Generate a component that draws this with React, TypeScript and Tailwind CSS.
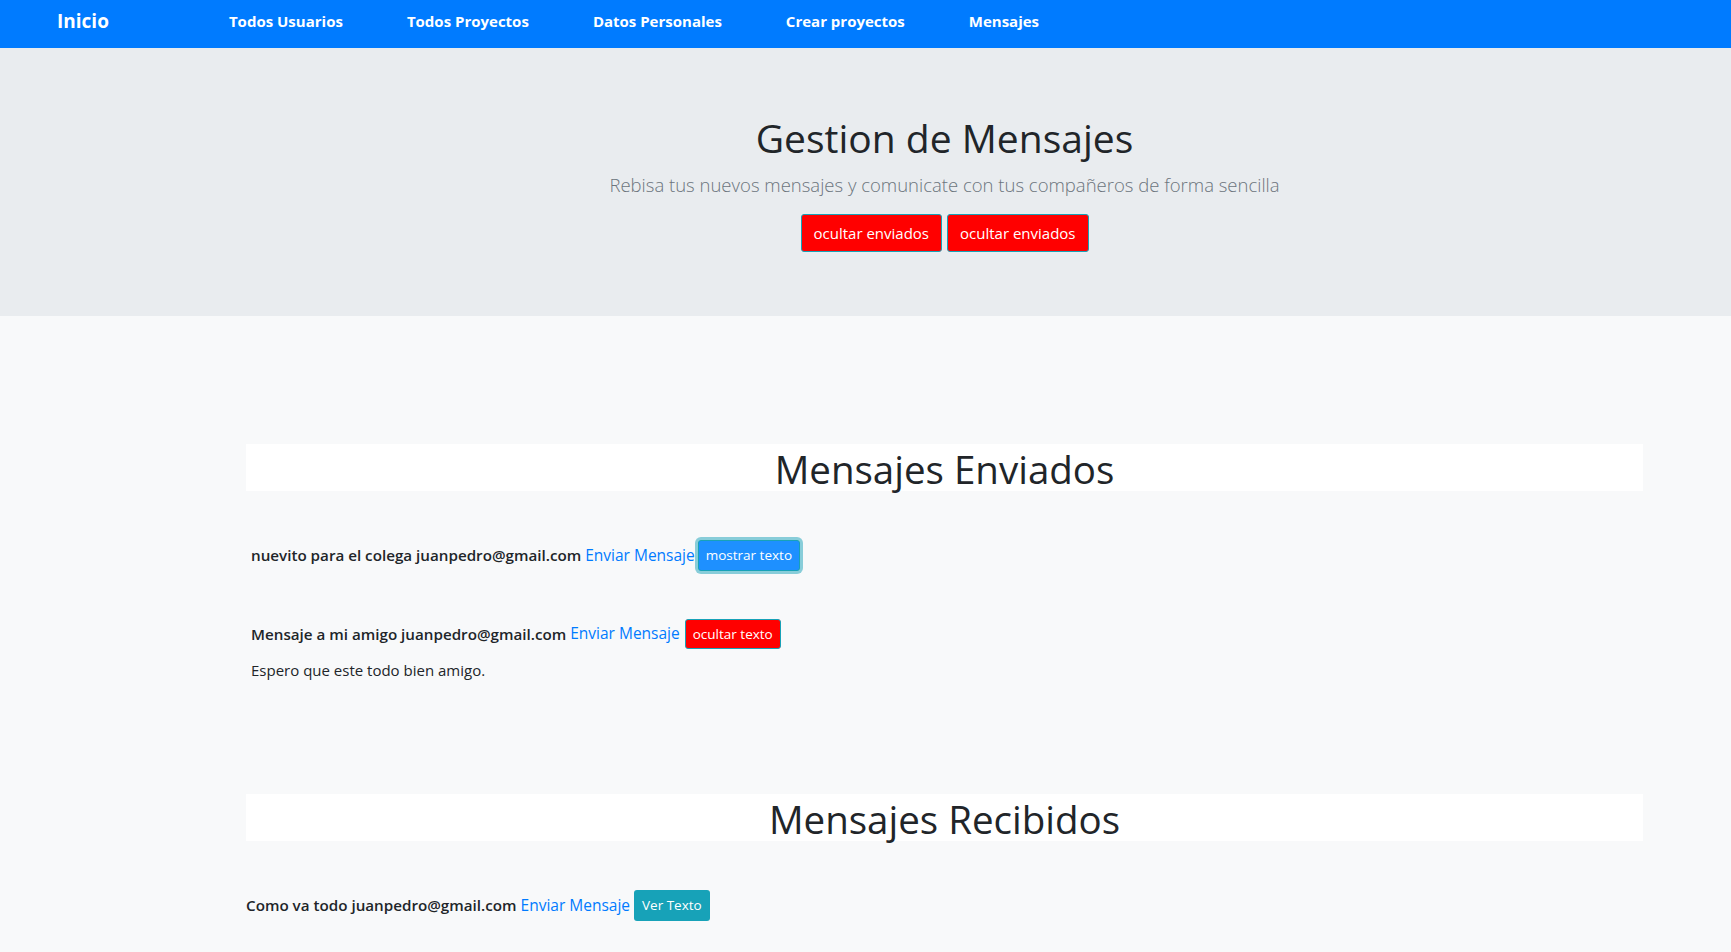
import React from 'react';

const navLinks = ['Todos Usuarios', 'Todos Proyectos', 'Datos Personales', 'Crear proyectos', 'Mensajes'];

export default function App() {
  return (
    <div className="min-h-[952px] bg-[#f8f9fa] text-[#212529] font-['Open_Sans',_'Noto_Sans',_sans-serif]">
      <nav className="flex h-[48px] items-center bg-[#007bff] pb-[6px] pl-[57px]">
        <a className="text-[19px] font-bold text-white">Inicio</a>
        <ul className="ml-[120px] flex gap-[64px]">
          {navLinks.map((l) => (
            <li key={l} className="text-[15px] font-bold text-white">{l}</li>
          ))}
        </ul>
      </nav>

      <header className="bg-[#e9ecef] pb-[64px] pl-[158px] pt-[66px] text-center">
        <h1 className="text-[39px] font-medium leading-[48px]">Gestion de Mensajes</h1>
        <p className="mt-[8px] text-[18.5px] font-light leading-[30px] text-[#6c757d]">
          Rebisa tus nuevos mensajes y comunicate con tus compañeros de forma sencilla
        </p>
        <div className="mt-[14px] flex justify-center gap-[5px]">
          <button className="h-[38px] rounded-[3px] border border-[#17a2b8] bg-[#ff0000] px-[12px] text-[15px] text-white">ocultar enviados</button>
          <button className="h-[38px] rounded-[3px] border border-[#17a2b8] bg-[#ff0000] px-[12px] text-[15px] text-white">ocultar enviados</button>
        </div>
      </header>

      <main className="mx-[88px] pb-[31px] pl-[158px] pt-[128px]">
        <section>
          <h2 className="h-[47px] bg-white text-center text-[38.5px] font-medium leading-[50px]">Mensajes Enviados</h2>
          <div className="mt-[49px] flex h-[31px] items-center pl-[5px] text-[15.5px]">
            <span className="text-[15.2px] font-semibold">nuevito para el colega juanpedro@gmail.com</span>
            <a className="ml-[4px] text-[#007bff]">Enviar Mensaje</a>
            <button className="ml-[3px] h-[31px] rounded-[3px] border border-[#17a2b8] bg-[#1e90ff] px-[7px] text-[13.5px] text-white shadow-[0_0_0_3px_rgba(23,162,184,0.5)]">mostrar texto</button>
          </div>
          <div className="mt-[48px] flex h-[30px] items-center pl-[5px] text-[15.5px]">
            <span className="text-[15.2px] font-semibold">Mensaje a mi amigo juanpedro@gmail.com</span>
            <a className="ml-[4px] text-[#007bff]">Enviar Mensaje</a>
            <button className="ml-[5px] h-[30px] rounded-[3px] border border-[#17a2b8] bg-[#ff0000] px-[7px] text-[13.5px] text-white">ocultar texto</button>
          </div>
          <p className="mt-[9px] pl-[5px] text-[15px] leading-[24px]">Espero que este todo bien amigo.</p>
        </section>

        <section className="mt-[112px]">
          <h2 className="h-[47px] bg-white text-center text-[38.5px] font-medium leading-[50px]">Mensajes Recibidos</h2>
          <div className="mt-[49px] flex h-[31px] items-center text-[15.5px]">
            <span className="text-[15.2px] font-semibold">Como va todo juanpedro@gmail.com</span>
            <a className="ml-[4px] text-[#007bff]">Enviar Mensaje</a>
            <button className="ml-[4px] h-[31px] rounded-[3px] bg-[#17a2b8] px-[8px] text-[13.5px] text-white">Ver Texto</button>
          </div>
        </section>
      </main>
    </div>
  );
}
